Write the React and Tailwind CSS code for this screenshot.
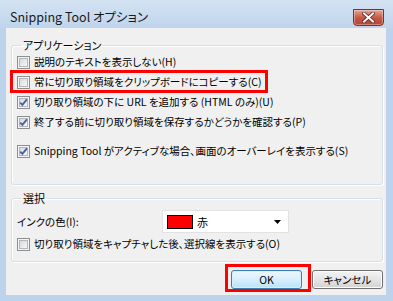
import React from "react";

const jp = "font-['Noto_Sans_CJK_JP',sans-serif] [font-feature-settings:'palt']";

function Check({ checked }) {
  return (
    <span className="relative block w-[13px] h-[13px] shrink-0 border border-[#8e8f8f] bg-[#f4f4f4] p-[1px]">
      <span className="block w-full h-full border border-[#b3b7bc] bg-gradient-to-br from-[#d6d9dd] to-[#f7f7f7]" />
      {checked && (
        <svg className="absolute inset-0" width="11" height="11" viewBox="0 0 11 11">
          <path d="M2.2 5.6 L4.4 7.9 L8.9 2.4" fill="none" stroke="#4661a3" strokeWidth="1.9" />
        </svg>
      )}
    </span>
  );
}

function Row({ checked, children, className = "" }) {
  return (
    <div className={"flex items-center gap-[4px] h-[20px] " + className}>
      <Check checked={checked} />
      <span className="whitespace-nowrap">{children}</span>
    </div>
  );
}

export default function App() {
  return (
    <div className={"w-[393px] h-[301px] flex flex-col bg-[#bcd3eb] text-[10.5px] text-black leading-[14px] " + jp}>
      {/* title bar */}
      <div className="h-[28px] flex items-center pt-[6px] pl-[10px] pr-[9px] bg-gradient-to-b from-[#d4e3f3] to-[#bfd5ec]">
        <span className="text-[12.5px] text-[#1a1a1a] whitespace-nowrap">Snipping Tool オプション</span>
        <button className="ml-auto w-[31px] h-[17px] rounded-b-[4px] border border-[#7d2f26] bg-gradient-to-b from-[#e6a495] via-[#c95a48] to-[#b8412f] flex items-center justify-center shadow-[inset_0_0_0_1px_rgba(255,255,255,0.35)]">
          <svg width="13" height="11" viewBox="0 0 13 11">
            <path d="M2 1.5 L11 9.5 M11 1.5 L2 9.5" stroke="#5a241c" strokeWidth="3.6" strokeLinecap="square" />
            <path d="M2 1.5 L11 9.5 M11 1.5 L2 9.5" stroke="#ffffff" strokeWidth="2" strokeLinecap="square" />
          </svg>
        </button>
      </div>

      {/* client */}
      <div className="flex-1 ml-[6px] mr-[7px] mb-[6px] bg-[#f0f0f0] pt-[10px] pl-[5px] pr-[3px] flex flex-col">
        <fieldset className="border border-[#d5dfe5] rounded-[3px] shadow-[inset_1px_1px_0_#fff,1px_1px_0_#fff] pl-[5px] pb-[23px]">
          <legend className="ml-[4px] px-[2px] leading-[14px] text-[11px]">アプリケーション</legend>
          <Row>説明のテキストを表示しない(H)</Row>
          <div className="relative">
            <Row>常に切り取り領域をクリップボードにコピーする(C)</Row>
            <span className="absolute left-[-7px] top-[-2px] w-[258px] h-[23px] border-[3px] border-[#ff0000]" />
          </div>
          <Row checked>切り取り領域の下に URL を追加する (HTML のみ)(U)</Row>
          <Row checked>終了する前に切り取り領域を保存するかどうかを確認する(P)</Row>
          <Row checked className="mt-[9px]">Snipping Tool がアクティブな場合、画面のオーバーレイを表示する(S)</Row>
        </fieldset>

        <fieldset className="mt-[6px] border border-[#d5dfe5] rounded-[3px] shadow-[inset_1px_1px_0_#fff,1px_1px_0_#fff] pl-[5px] pb-[7px]">
          <legend className="ml-[4px] px-[2px] leading-[14px] text-[11px]">選択</legend>
          <div className="flex items-center h-[23px] mt-[5px]">
            <span className="w-[145px]">インクの色(I):</span>
            <div className="w-[127px] h-[23px] bg-white border border-[#e2e2e2] flex items-center pl-[4px] pr-[6px]">
              <span className="w-[26px] h-[14px] border border-black bg-[#ff0000]" />
              <span className="ml-[4px] text-[11px]">赤</span>
              <svg className="ml-auto" width="8" height="4" viewBox="0 0 8 4">
                <path d="M0 0 H7 L3.5 4 Z" fill="#000" />
              </svg>
            </div>
          </div>
          <Row className="mt-[1px]">切り取り領域をキャプチャした後、選択線を表示する(O)</Row>
        </fieldset>

        <div className="flex justify-end gap-[10px] mt-[8px]">
          <div className="relative">
            <button className="w-[71px] h-[19px] rounded-[3px] border border-[#3c7fb1] bg-gradient-to-b from-[#ecf7fd] via-[#d7effc] to-[#b9e1f8] shadow-[inset_0_0_0_1px_#d3f0ff] leading-[16px]">
              OK
            </button>
            <span className="absolute left-[-6px] top-[-6px] w-[86px] h-[28px] border-[3px] border-[#ff0000]" />
          </div>
          <button className="w-[71px] h-[19px] rounded-[3px] border border-[#707070] bg-gradient-to-b from-[#f3f3f3] via-[#e5e5e5] to-[#d2d2d2] shadow-[inset_0_0_0_1px_#fcfcfc] leading-[16px]">
            キャンセル
          </button>
        </div>
      </div>
    </div>
  );
}
